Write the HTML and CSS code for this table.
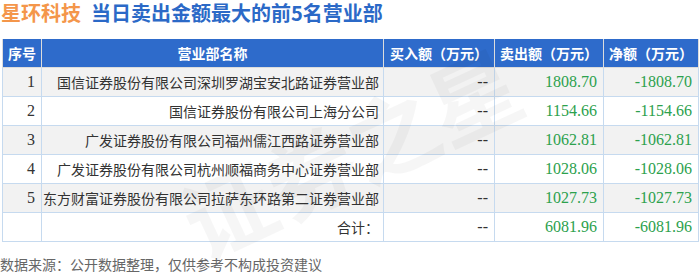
FILE: index.html
```html
<!DOCTYPE html>
<html lang="zh">
<head>
<meta charset="utf-8">
<link rel="stylesheet" href="styles.css">
</head>
<body>
<div class="page">
  <h1 class="title"><span class="stock">星环科技</span><span class="desc">当日卖出金额最大的前5名营业部</span></h1>
  <table class="grid">
    <colgroup>
      <col class="c-seq"><col class="c-name"><col class="c-buy"><col class="c-sell"><col class="c-net">
    </colgroup>
    <thead>
      <tr><th>序号</th><th>营业部名称</th><th>买入额（万元）</th><th>卖出额（万元）</th><th>净额（万元）</th></tr>
    </thead>
    <tbody>
      <tr class="odd"><td class="num">1</td><td class="name">国信证券股份有限公司深圳罗湖宝安北路证券营业部</td><td class="num">--</td><td class="num up">1808.70</td><td class="num up">-1808.70</td></tr>
      <tr><td class="num">2</td><td class="name">国信证券股份有限公司上海分公司</td><td class="num">--</td><td class="num up">1154.66</td><td class="num up">-1154.66</td></tr>
      <tr class="odd"><td class="num">3</td><td class="name">广发证券股份有限公司福州儒江西路证券营业部</td><td class="num">--</td><td class="num up">1062.81</td><td class="num up">-1062.81</td></tr>
      <tr><td class="num">4</td><td class="name">广发证券股份有限公司杭州顺福商务中心证券营业部</td><td class="num">--</td><td class="num up">1028.06</td><td class="num up">-1028.06</td></tr>
      <tr class="odd"><td class="num">5</td><td class="name">东方财富证券股份有限公司拉萨东环路第二证券营业部</td><td class="num">--</td><td class="num up">1027.73</td><td class="num up">-1027.73</td></tr>
      <tr><td></td><td class="name">合计：</td><td class="num">--</td><td class="num up">6081.96</td><td class="num up">-6081.96</td></tr>
    </tbody>
  </table>
  <p class="source">数据来源：公开数据整理，仅供参考不构成投资建议</p>
  <div class="watermark" aria-hidden="true">证券之星</div>
</div>
</body>
</html>
```
FILE: styles.css
```css
html, body {
  margin: 0;
  padding: 0;
  background: #fff;
}
.page {
  position: relative;
  width: 700px;
  height: 273px;
  font-family: "Noto Sans CJK SC", "Noto Sans", sans-serif;
}
.title {
  margin: 0;
  padding: 0 0 0 1px;
  height: 39px;
  font-size: 20px;
  line-height: 26px;
  font-weight: 700;
  white-space: nowrap;
}
.stock { color: #f4964a; margin-right: 10px; }
.desc { color: #2b69c7; }
.grid {
  margin-left: 2px;
  width: 696px;
  table-layout: fixed;
  border-collapse: collapse;
  font-size: 14px;
  color: #333;
}
.c-seq { width: 39px; }
.c-name { width: 342px; }
.c-buy { width: 111px; }
.c-sell { width: 109px; }
.c-net { width: 95px; }
.grid th {
  background: #2e6bcb;
  color: #fff;
  font-weight: 700;
  height: 28px;
  padding: 0;
  border: 1px solid #dcdcdc;
  border-top: 0;
  white-space: nowrap;
  text-align: center;
}
.grid td {
  height: 28px;
  padding: 0 5px;
  border: 1px solid #c6daef;
  white-space: nowrap;
}
.grid tr.odd td { background: #f2f2f2; }
.grid td.name { text-align: right; padding-right: 4px; padding-left: 0; }
.grid td.num {
  text-align: right;
  font-family: "Liberation Serif", "Noto Sans CJK SC", serif;
  font-size: 16px;
  padding-right: 6px;
}
.grid td.up { color: #2ca14d; }
.source {
  margin: 12px 0 0 0;
  font-size: 14px;
  line-height: 20px;
  color: #666;
}
.watermark {
  position: absolute;
  left: 170px;
  top: 100px;
  font-size: 90px;
  line-height: 100px;
  font-weight: 700;
  color: rgba(0, 0, 0, 0.035);
  transform: rotate(-25deg);
  white-space: nowrap;
  pointer-events: none;
}
```
